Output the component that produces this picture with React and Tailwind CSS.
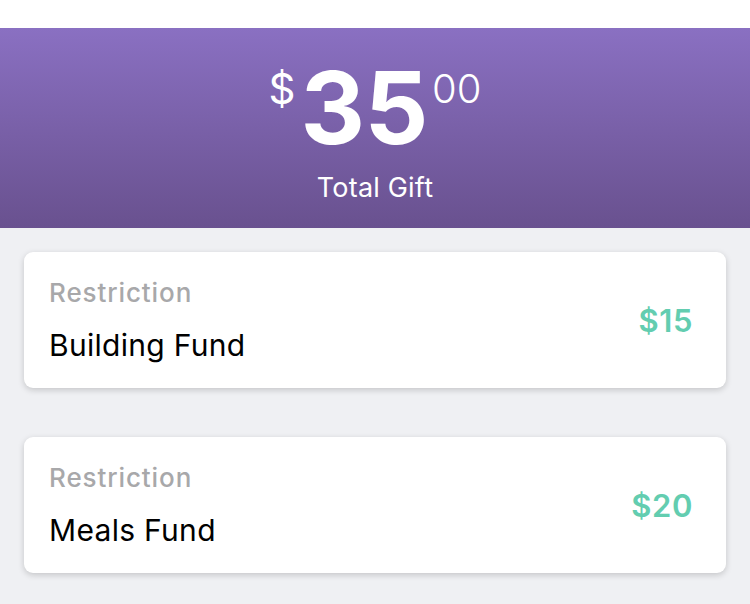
export default function App() {
  const cards = [
    { name: "Building Fund", amount: "$15" },
    { name: "Meals Fund", amount: "$20" },
  ];
  return (
    <div className="w-[750px] h-[604px] overflow-hidden bg-[#eff0f3] flex flex-col" style={{ fontFamily: "Inter, 'Noto Sans', sans-serif" }}>
      <div className="h-[28px] bg-white shrink-0" />
      <div className="h-[200px] shrink-0 bg-gradient-to-b from-[#8a70c2] to-[#69518f] flex flex-col items-center pt-[30px] text-white">
        <div className="flex items-start">
          <span className="text-[42px] leading-none mt-[10px] mr-[5px] font-normal">$</span>
          <span className="text-[100px] leading-none font-bold tracking-[-0.5px]">35</span>
          <span className="text-[40px] leading-none mt-[11px] ml-[4px] font-light">00</span>
        </div>
        <div className="text-[27px] leading-[26px] mt-[17px] tracking-[0.2px]">Total Gift</div>
      </div>
      <div className="flex flex-col px-[24px] pt-[24px] gap-[49px]">
        {cards.map((c) => (
          <div key={c.name} className="h-[136px] bg-white rounded-[9px] shadow-[0_2px_6px_rgba(0,0,0,0.18)] flex items-center justify-between pl-[25px] pr-[33px]">
            <div className="flex flex-col self-start pt-[26px]">
              <div className="text-[26px] leading-[30px] font-medium text-[#a8a8aa] tracking-[0.9px]">Restriction</div>
              <div className="text-[30px] leading-[36px] mt-[19px] text-black tracking-[0.3px]">{c.name}</div>
            </div>
            <div className="text-[31px] font-semibold text-[#63cdb0] leading-none tracking-[0.6px]">{c.amount}</div>
          </div>
        ))}
      </div>
    </div>
  );
}
